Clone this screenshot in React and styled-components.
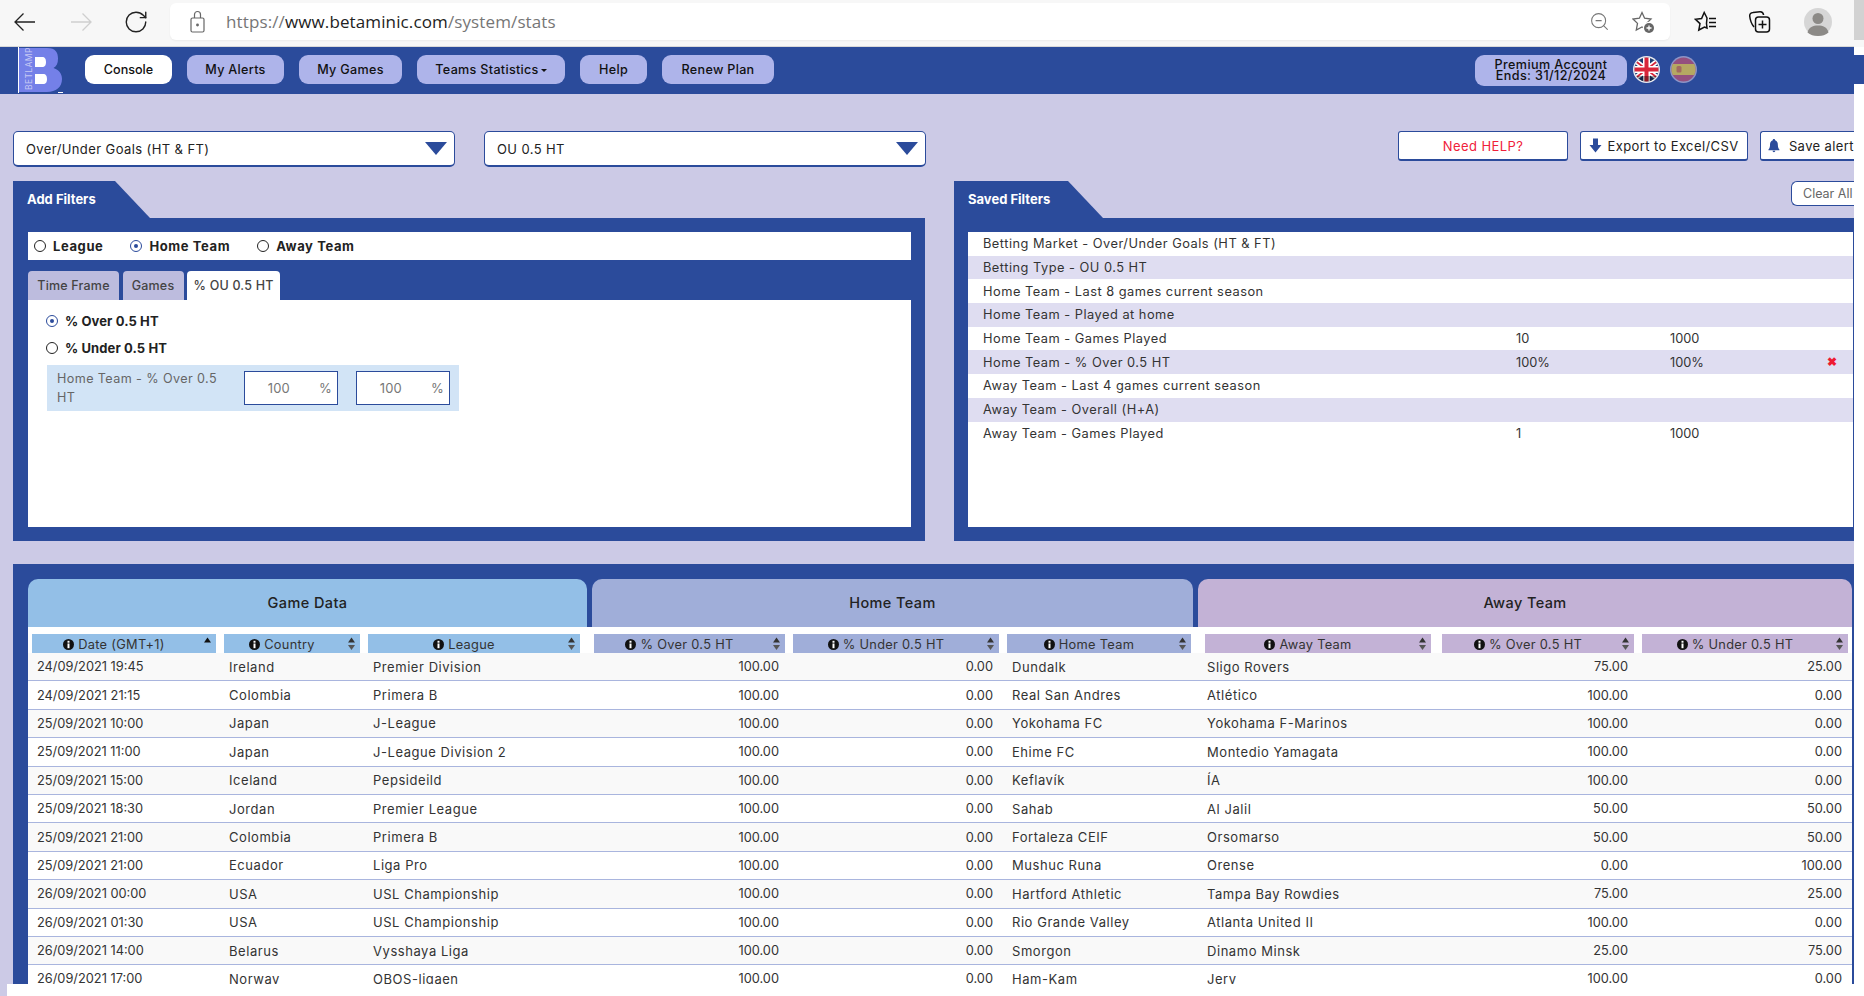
import React from "react";
import styled, { createGlobalStyle } from "styled-components";
import { RotateCw, ZoomOut } from "lucide-react";

const FONT = `Inter, "Open Sans", "Liberation Sans", sans-serif`;

const Global = createGlobalStyle`
  html, body { margin: 0; padding: 0; background: #fff; }
  #root { width: 1864px; height: 996px; overflow: hidden; }
  * { box-sizing: border-box; }
`;

const Page = styled.div`
  width: 1864px; height: 996px; display: flex; overflow: hidden; background: #fff;
  font-family: ${FONT}; font-size: 13px; color: #333;
`;
const Shot = styled.div`
  width: 1854px; height: 996px; display: flex; flex-direction: column; flex: none;
`;
const Gutter = styled.div`
  width: 10px; flex: none; display: flex; flex-direction: column;
`;
const GutterPart = styled.div`
  height: ${p => p.$h}px; background: ${p => p.$c};
`;
const Chrome = styled.div`
  height: 47px; flex: none; background: #f7f7f7; border-bottom: 1px solid #d9d9d9;
  display: flex; align-items: center; padding: 0 0 3px 14px;
`;
const ChromeBtn = styled.div`
  width: ${p => p.$w}px; flex: none; display: flex; align-items: center; color: ${p => p.$c || "#222"};
`;
const Address = styled.div`
  width: 1500px; height: 37px; background: #fff; border-radius: 6px; flex: none;
  display: flex; align-items: center; padding: 0 14px 0 20px; color: #767676;
  font-family: "Open Sans", sans-serif; font-size: 17px; letter-spacing: .12px;
  box-shadow: 0 1px 2px rgba(0,0,0,.05);
`;
const Url = styled.span`
  flex: 1; margin-left: 21px;
  b { font-weight: 400; color: #222; }
`;
const AddrIcon = styled.div`
  display: flex; margin-left: 22px; color: #777;
`;
const ChromeRight = styled.div`
  display: flex; align-items: center; flex: 1; padding-left: 24px;
`;
const ChromeIcon = styled.div`
  display: flex; margin-right: ${p => p.$mr || 0}px;
`;
const Nav = styled.div`
  height: 47px; flex: none; background: #2b4b9b; display: flex; align-items: center; padding-left: 18px;
`;
const Logo = styled.div`
  width: 45px; height: 46px; flex: none; margin-right: 22px; margin-bottom: 1px; display: flex;
  position: relative; overflow: hidden;
`;
const LogoText = styled.span`
  position: absolute; left: 7px; bottom: 3px; transform-origin: left bottom; transform: rotate(-90deg) translate(0, 100%);
  color: #c6c9f4; font-size: 8.5px; letter-spacing: .4px; line-height: 9px;
`;
const NavBtn = styled.div`
  width: ${p => p.$w}px; height: 29px; margin-right: 15px; margin-bottom: 2px; border-radius: 9px; display: flex; align-items: center; justify-content: center;
  background: ${p => p.$active ? "#fff" : "#aeb4ea"}; color: #111; font-size: 12.6px; font-weight: 500; flex: none; letter-spacing: ${p => p.$active ? 0 : ".3px"};
`;
const Caret = styled.span`
  width: 0; height: 0; margin-left: 2px; margin-top: 2px; border: 3px solid transparent; border-top: 3px solid #111; border-bottom: none;
`;
const NavRight = styled.div`
  margin-left: auto; display: flex; align-items: center; padding-right: 157px;
`;
const Premium = styled.div`
  width: 152px; height: 31px; border-radius: 9px; background: #aeb4ea; color: #111; font-size: 12.6px; line-height: 10.5px; letter-spacing: .4px;
  text-align: center; display: flex; flex-direction: column; justify-content: center; font-weight: 500; margin-right: 6px;
`;
const Flag = styled.svg`
  display: block; margin-left: ${p => p.$ml || 0}px; margin-top: -3px;
`;
const Body = styled.div`
  height: 890px; flex: none; overflow: hidden; background: #cccae6; padding: 37px 0 0 13px; display: flex; flex-direction: column;
`;
const TopRow = styled.div`
  display: flex; height: 36px; flex: none; margin-bottom: 14px;
`;
const Select = styled.div`
  width: 442px; height: 36px; background: #fff; border: 1px solid #2b4b9b; border-bottom-width: 2px; border-radius: 5px; flex: none; margin-right: 29px;
  display: flex; align-items: center; justify-content: space-between; padding: 0 7px 0 12px; color: #222; font-size: 13px; letter-spacing: .4px;
`;
const TriDown = styled.span`
  width: 0; height: 0; border-left: 11px solid transparent; border-right: 11px solid transparent; border-top: 13px solid #2b4b9b;
`;
const Actions = styled.div`
  margin-left: auto; display: flex; gap: 12px;
`;
const ActionBtn = styled.div`
  width: ${p => p.$w}px; height: 30px; background: #fff; border: 1px solid #2b4b9b; border-bottom-width: 2px; border-right-width: ${p => p.$clip ? 0 : "1px"}; border-radius: ${p => p.$clip ? "3px 0 0 3px" : "3px"}; display: flex; align-items: center;
  justify-content: ${p => p.$clip ? "flex-start" : "center"}; gap: ${p => p.$clip ? 9 : 5}px; color: ${p => p.$c || "#222"}; font-size: 13px; white-space: nowrap; overflow: hidden; letter-spacing: .4px;
  padding-left: ${p => p.$clip ? "7px" : 0};
`;
const Panels = styled.div`
  display: flex; gap: 29px; height: 360px; flex: none; margin-bottom: 23px;
`;
const Panel = styled.div`
  width: ${p => p.$w}px; flex: none; display: flex; flex-direction: column; position: relative;
`;
const Tab = styled.div`
  width: ${p => p.$w}px; height: 37px; flex: none; background: #2b4b9b; color: #fff; font-weight: 700; font-size: 13px;
  clip-path: polygon(0 0, ${p => p.$w - 35}px 0, 100% 100%, 0 100%); display: flex; align-items: flex-start; padding: 11px 0 0 14px; line-height: 14px;
`;
const ClearAll = styled.div`
  position: absolute; top: 0; right: 0; width: 63px; height: 25px; background: #fff; border: 1px solid #2b4b9b; border-right: none; border-radius: 6px 0 0 6px;
  display: flex; align-items: center; padding-left: 11px; color: #666; font-size: 12.5px; white-space: nowrap; overflow: hidden;
`;
const PanelBody = styled.div`
  flex: 1; background: #2b4b9b; padding: 14px ${p => p.$pr ?? 14}px 14px ${p => p.$pl ?? 15}px; display: flex; flex-direction: column;
`;
const RadioBar = styled.div`
  height: 28px; background: #fff; flex: none; display: flex; align-items: center; padding-left: 6px; font-weight: 700; color: #222; letter-spacing: .6px;
`;
const RadioBtn = styled.span`
  width: 12px; height: 12px; border-radius: 50%; border: 1.6px solid ${p => p.$on ? "#2b4b9b" : "#222"}; display: inline-flex; align-items: center; justify-content: center; flex: none; margin-right: 7px;
  &::after { content: ""; width: 4px; height: 4px; border-radius: 50%; background: ${p => p.$on ? "#2b4b9b" : "transparent"}; }
`;
const RadioLabel = styled.label`
  display: flex; align-items: center; margin-right: ${p => p.$mr || 0}px; height: ${p => p.$h ? p.$h + "px" : "auto"};
`;
const Tabs = styled.div`
  display: flex; gap: 3.5px; margin-top: 11px; height: 29px; flex: none;
`;
const FTab = styled.div`
  width: ${p => p.$w}px; height: 29px; background: ${p => p.$on ? "#fff" : "#bdbcde"}; color: #444; border-radius: 4px 4px 0 0; display: flex; align-items: center; justify-content: center; font-size: 12.5px; font-weight: 500; letter-spacing: .2px;
`;
const TabBody = styled.div`
  flex: 1; background: #fff; padding: 7px 19px;
`;
const StrongRadios = styled.div`
  font-weight: 700; color: #222; letter-spacing: .1px; margin-left: -1px;
`;
const RangeRow = styled.div`
  width: 412px; height: 46px; background: #d2e4f6; display: flex; align-items: center; padding-left: 10px; margin-top: 4px; margin-left: 0;
`;
const RangeLabel = styled.div`
  width: 187px; flex: none; line-height: 19px; color: #666; font-size: 12.6px; padding-right: 10px; letter-spacing: .4px; margin-top: -1px;
`;
const RangeInput = styled.div`
  width: 94px; height: 34px; flex: none; background: #fff; border: 1px solid #2b4b9b; margin-right: 18px; display: flex; align-items: center; justify-content: flex-end; color: #777; font-size: 13px; padding-right: 5px; letter-spacing: .2px;
  span:first-child { margin-right: 29px; }
`;
const SavedList = styled.div`
  flex: 1; background: #fff; margin-right: 1px;
`;
const SavedRow = styled.div`
  height: 23.7px; background: ${p => p.$alt ? "#dfddf1" : "#fff"}; display: grid; grid-template-columns: 533px 154px 161px 1fr; padding-left: 15px; align-items: center; color: #333; font-size: 12.8px; white-space: nowrap;
  span:first-child { letter-spacing: .5px; }
`;
const Del = styled.span`
  color: #ee1a32; font-weight: 900; font-size: 12px; line-height: 1; margin-left: -4px;
`;
const DataPanel = styled.div`
  width: 1841px; height: 420px; flex: none; background: #2b4b9b; padding: 15px 2px 0 15px; overflow: hidden;
`;
const Groups = styled.div`
  display: flex; height: 48px;
`;
const Group = styled.div`
  width: ${p => p.$w}px; margin-right: ${p => p.$mr || 0}px; flex: none; background: ${p => p.$c}; border-radius: 10px 10px 0 0; display: flex; align-items: center; justify-content: center; font-size: 14.5px; font-weight: 500; color: #222; letter-spacing: .4px; padding-bottom: 2px;
`;
const Table = styled.div`
  background: #fff; padding-top: 7px; height: 360px; overflow: hidden; font-size: 12.8px;
`;
const HeadRow = styled.div`
  display: flex; height: 19px;
`;
const HCell = styled.div`
  width: ${p => p.$w}px; margin-left: ${p => p.$ml}px; flex: none; background: ${p => p.$c}; position: relative; display: flex; align-items: center; justify-content: center; gap: 4px; color: #333; font-size: 12.8px; padding: 1px 20px 0 0; white-space: nowrap; letter-spacing: .3px;
`;
const Sort = styled.svg`
  position: absolute; right: 4px; top: 3px;
`;
const Row = styled.div`
  display: flex; height: 28.4px; align-items: center; background: ${p => p.$odd ? "#f9f9f9" : "#fff"}; border-bottom: 1px solid #a9b5de; white-space: nowrap; color: #333;
`;
const Cell = styled.div`
  width: ${p => p.$w}px; flex: none; padding-left: ${p => p.$pl || 0}px; padding-right: ${p => p.$pr || 0}px; text-align: ${p => p.$right ? "right" : "left"};
  letter-spacing: ${p => p.$text ? ".55px" : 0}; font-size: ${p => p.$text ? "13px" : "12.8px"};
`;
const Foot = styled.div`
  height: 12px; flex: none; display: flex;
`;
const FootStrip = styled.div`
  width: 7px; background: #cccae6;
`;

const Info = () => (
  <svg width="11" height="11" viewBox="0 0 11 11" aria-hidden="true">
    <circle cx="5.5" cy="5.5" r="5.5" fill="#111" />
    <rect x="4.5" y="1.8" width="2" height="1.9" fill="#fff" />
    <rect x="4.5" y="4.5" width="2" height="4.7" fill="#fff" />
  </svg>
);
const SortIcon = ({ only }) => (
  <Sort width="9" height="14" viewBox="0 0 9 14">
    <path d="M4.5 0.5 L8 5.5 H1 Z" fill={only ? "#111" : "#333"} />
    {!only && <path d="M4.5 13 L8 8 H1 Z" fill="#555" />}
  </Sort>
);
const LogoMark = () => (
  <svg width="45" height="46" viewBox="0 0 45 46" aria-hidden="true">
    <rect x="0" y="0" width="45" height="46" fill="#2b4b9b" />
    <rect x="0" y="0" width="1" height="46" fill="#fff" />
    <path d="M1 1 H29 C38 1 40 6 40 11.5 C40 16.5 38.5 19.5 35.5 21 C40 22.5 44 26 44 32 C44 40 38 45 29 45 H1 Z" fill="#7480e8" />
    <path d="M17 10 H24 C27 10 28 12 28 15 C28 18 27 20 24 20 H17 Z M17 27 H25 C28 27 29 29 29 32 C29 35 28 37 25 37 H17 Z" fill="#fff" />
    <rect x="40" y="45" width="5" height="1" fill="#fff" />
  </svg>
);
const UK = () => (
  <Flag width="27" height="27" viewBox="0 0 27 27">
    <defs><clipPath id="ukc"><circle cx="13.5" cy="13.5" r="12" /></clipPath></defs>
    <circle cx="13.5" cy="13.5" r="13.5" fill="#e8e8ee" />
    <g clipPath="url(#ukc)">
      <rect width="27" height="27" fill="#1d3d72" />
      <path d="M0 3 L27 24 M27 3 L0 24" stroke="#fff" strokeWidth="5" />
      <path d="M0 3 L27 24 M27 3 L0 24" stroke="#d8263a" strokeWidth="1.8" />
      <path d="M13.5 0 V27 M0 13.5 H27" stroke="#fff" strokeWidth="7" />
      <path d="M13.5 0 V27 M0 13.5 H27" stroke="#d8263a" strokeWidth="4" />
      <rect y="20" width="27" height="7" fill="#000" opacity=".35" />
    </g>
  </Flag>
);
const ES = () => (
  <Flag $ml={10} width="27" height="27" viewBox="0 0 27 27">
    <defs><clipPath id="esc"><circle cx="13.5" cy="13.5" r="12" /></clipPath></defs>
    <circle cx="13.5" cy="13.5" r="13.5" fill="#8d94c6" />
    <g clipPath="url(#esc)">
      <rect width="27" height="27" fill="#94507f" />
      <rect y="8" width="27" height="11" fill="#b5a862" />
      <rect x="6.5" y="10" width="5" height="6.5" rx="1.5" fill="#a26a60" />
    </g>
  </Flag>
);

const rows = [
  ["24/09/2021 19:45","Ireland","Premier Division","100.00","0.00","Dundalk","Sligo Rovers","75.00","25.00"],
  ["24/09/2021 21:15","Colombia","Primera B","100.00","0.00","Real San Andres","Atlético","100.00","0.00"],
  ["25/09/2021 10:00","Japan","J-League","100.00","0.00","Yokohama FC","Yokohama F-Marinos","100.00","0.00"],
  ["25/09/2021 11:00","Japan","J-League Division 2","100.00","0.00","Ehime FC","Montedio Yamagata","100.00","0.00"],
  ["25/09/2021 15:00","Iceland","Pepsideild","100.00","0.00","Keflavík","ÍA","100.00","0.00"],
  ["25/09/2021 18:30","Jordan","Premier League","100.00","0.00","Sahab","Al Jalil","50.00","50.00"],
  ["25/09/2021 21:00","Colombia","Primera B","100.00","0.00","Fortaleza CEIF","Orsomarso","50.00","50.00"],
  ["25/09/2021 21:00","Ecuador","Liga Pro","100.00","0.00","Mushuc Runa","Orense","0.00","100.00"],
  ["26/09/2021 00:00","USA","USL Championship","100.00","0.00","Hartford Athletic","Tampa Bay Rowdies","75.00","25.00"],
  ["26/09/2021 01:30","USA","USL Championship","100.00","0.00","Rio Grande Valley","Atlanta United II","100.00","0.00"],
  ["26/09/2021 14:00","Belarus","Vysshaya Liga","100.00","0.00","Smorgon","Dinamo Minsk","25.00","75.00"],
  ["26/09/2021 17:00","Norway","OBOS-ligaen","100.00","0.00","Ham-Kam","Jerv","100.00","0.00"],
];
const saved = [
  ["Betting Market - Over/Under Goals (HT & FT)"],
  ["Betting Type - OU 0.5 HT"],
  ["Home Team - Last 8 games current season"],
  ["Home Team - Played at home"],
  ["Home Team - Games Played","10","1000"],
  ["Home Team - % Over 0.5 HT","100%","100%","x"],
  ["Away Team - Last 4 games current season"],
  ["Away Team - Overall (H+A)"],
  ["Away Team - Games Played","1","1000"],
];
const G = "#93bfe7", H = "#a0aed9", A = "#c3b2d6";
const heads = [
  ["Date (GMT+1)",184,4,G,true],["Country",136,8,G],["League",212,8,G],
  ["% Over 0.5 HT",191,14,H],["% Under 0.5 HT",206,8,H],["Home Team",184,8,H],
  ["Away Team",226,14,A],["% Over 0.5 HT",192,11,A],["% Under 0.5 HT",206,8,A],
];

export default function App() {
  return (
    <Page>
      <Global />
      <Shot>
        <Chrome>
          <ChromeBtn $w={56}>
            <svg width="22" height="20" viewBox="0 0 22 20" fill="none" stroke="currentColor" strokeWidth="1.3" aria-hidden="true"><path d="M21 10 H1.5 M9.5 1.5 L1 10 L9.5 18.5" /></svg>
          </ChromeBtn>
          <ChromeBtn $w={53} $c="#cfcfcf">
            <svg width="22" height="20" viewBox="0 0 22 20" fill="none" stroke="currentColor" strokeWidth="1.3" aria-hidden="true"><path d="M1 10 H20.5 M12.5 1.5 L21 10 L12.5 18.5" /></svg>
          </ChromeBtn>
          <ChromeBtn $w={47}><RotateCw size={26} strokeWidth={1.3} /></ChromeBtn>
          <Address>
            <svg width="15" height="24" viewBox="0 0 15 24" fill="none" stroke="#666" strokeWidth="1.2" aria-hidden="true">
              <rect x="1" y="8" width="13" height="14" rx="1.5" />
              <path d="M4.5 8 V4.5 a3 3 0 0 1 6 0 V8" />
              <circle cx="7.5" cy="15" r=".8" fill="#666" />
            </svg>
            <Url>https://<b>www.betaminic.com</b>/system/stats</Url>
            <AddrIcon><ZoomOut size={21} strokeWidth={1.2} /></AddrIcon>
            <AddrIcon>
              <svg width="24" height="24" viewBox="0 0 24 24" fill="none" stroke="#666" strokeWidth="1.3" aria-hidden="true">
                <path d="M10 2.5 L12.6 8.2 L19 9 L14.5 13.4 L15.7 20 L10 17 L4.3 20 L5.5 13.4 L1 9 L7.4 8.2 Z" />
                <circle cx="17" cy="18" r="6.2" fill="#fff" stroke="none" />
                <circle cx="17" cy="18" r="5" fill="#666" stroke="none" />
                <path d="M17 15.5 V20.5 M14.5 18 H19.5" stroke="#fff" />
              </svg>
            </AddrIcon>
          </Address>
          <ChromeRight>
            <ChromeIcon $mr={30}>
              <svg width="24" height="24" viewBox="0 0 24 24" fill="none" stroke="#111" strokeWidth="1.5" aria-hidden="true">
                <path d="M13 8 L10.2 2.5 L7.6 8.5 L1.5 9.3 L6 13.6 L4.8 20 L10.5 17 L13 18 L12.5 13.5 Z" />
                <path d="M15 8.5 H22 M15 12.5 H22 M15 16.5 H22" />
              </svg>
            </ChromeIcon>
            <ChromeIcon $mr={32}>
              <svg width="24" height="24" viewBox="0 0 24 24" fill="none" stroke="#111" strokeWidth="1.5" aria-hidden="true">
                <path d="M6 17 C3.5 14 2 9 1.7 6 C1.5 4 3 2.5 5 2.4 L12 1.8 C14 1.7 15.3 3 15.6 5" />
                <rect x="7.5" y="7" width="14" height="15" rx="3" />
                <path d="M14.5 10.5 V18.5 M10.5 14.5 H18.5" />
              </svg>
            </ChromeIcon>
            <ChromeIcon>
              <svg width="28" height="28" viewBox="0 0 28 28" aria-hidden="true">
                <circle cx="14" cy="14" r="14" fill="#d6d6d6" />
                <circle cx="14" cy="10.5" r="5.5" fill="#8c8a87" />
                <path d="M3.5 24.5 C5 19 9 17.5 14 17.5 C19 17.5 23 19 24.5 24.5 C22 27 18 28 14 28 C10 28 6 27 3.5 24.5 Z" fill="#8c8a87" />
              </svg>
            </ChromeIcon>
          </ChromeRight>
        </Chrome>
        <Nav>
          <Logo>
            <LogoMark />
            <LogoText>BETLAMP</LogoText>
          </Logo>
          <NavBtn $w={87} $active>Console</NavBtn>
          <NavBtn $w={97}>My Alerts</NavBtn>
          <NavBtn $w={103}>My Games</NavBtn>
          <NavBtn $w={148}>Teams Statistics<Caret /></NavBtn>
          <NavBtn $w={67}>Help</NavBtn>
          <NavBtn $w={112}>Renew Plan</NavBtn>
          <NavRight>
            <Premium><span>Premium Account</span><span>Ends: 31/12/2024</span></Premium>
            <UK />
            <ES />
          </NavRight>
        </Nav>
        <Body>
          <TopRow>
            <Select>Over/Under Goals (HT &amp; FT)<TriDown /></Select>
            <Select>OU 0.5 HT<TriDown /></Select>
            <Actions>
              <ActionBtn $w={170} $c="#f0203a">Need HELP?</ActionBtn>
              <ActionBtn $w={168}>
                <svg width="13" height="15" viewBox="0 0 13 15" aria-hidden="true"><path d="M4 0.5 H9 V7 H12.5 L6.5 14.5 L0.5 7 H4 Z" fill="#2b4b9b" /></svg>
                Export to Excel/CSV
              </ActionBtn>
              <ActionBtn $w={94} $clip>
                <svg width="13" height="15" viewBox="0 0 13 15" aria-hidden="true"><path d="M6.5 0.5 C7.5 0.5 7.8 1.2 7.8 1.8 C10 2.4 10.8 4.5 10.8 7 C10.8 9.5 11.5 10.8 12.5 11.8 V12.6 H0.5 V11.8 C1.5 10.8 2.2 9.5 2.2 7 C2.2 4.5 3 2.4 5.2 1.8 C5.2 1.2 5.5 0.5 6.5 0.5 Z M5 13.3 H8 C8 14.2 7.3 14.8 6.5 14.8 C5.7 14.8 5 14.2 5 13.3 Z" fill="#2b4b9b" /></svg>
                Save alert
              </ActionBtn>
            </Actions>
          </TopRow>
          <Panels>
            <Panel $w={912}>
              <Tab $w={137}>Add Filters</Tab>
              <PanelBody>
                <RadioBar>
                  <RadioLabel $mr={27}><RadioBtn />League</RadioLabel>
                  <RadioLabel $mr={27}><RadioBtn $on />Home Team</RadioLabel>
                  <RadioLabel><RadioBtn />Away Team</RadioLabel>
                </RadioBar>
                <Tabs>
                  <FTab $w={91}>Time Frame</FTab>
                  <FTab $w={61}>Games</FTab>
                  <FTab $w={93} $on>% OU 0.5 HT</FTab>
                </Tabs>
                <TabBody>
                  <StrongRadios>
                    <RadioLabel $h={27}><RadioBtn $on />% Over 0.5 HT</RadioLabel>
                    <RadioLabel $h={27}><RadioBtn />% Under 0.5 HT</RadioLabel>
                  </StrongRadios>
                  <RangeRow>
                    <RangeLabel>Home Team - % Over 0.5 HT</RangeLabel>
                    <RangeInput><span>100</span><span>%</span></RangeInput>
                    <RangeInput><span>100</span><span>%</span></RangeInput>
                  </RangeRow>
                </TabBody>
              </PanelBody>
            </Panel>
            <Panel $w={900}>
              <Tab $w={149}>Saved Filters</Tab>
              <ClearAll>Clear All</ClearAll>
              <PanelBody $pr={0} $pl={14}>
                <SavedList>
                  {saved.map((r, i) => (
                    <SavedRow key={i} $alt={i % 2 === 1}>
                      <span>{r[0]}</span><span>{r[1]}</span><span>{r[2]}</span>
                      {r[3] ? <Del>✖</Del> : <span />}
                    </SavedRow>
                  ))}
                </SavedList>
              </PanelBody>
            </Panel>
          </Panels>
          <DataPanel>
            <Groups>
              <Group $w={559} $mr={5} $c={G}>Game Data</Group>
              <Group $w={601} $mr={5} $c={H}>Home Team</Group>
              <Group $w={654} $c={A}>Away Team</Group>
            </Groups>
            <Table>
              <HeadRow>
                {heads.map((h, i) => (
                  <HCell key={i} $w={h[1]} $ml={h[2]} $c={h[3]}>
                    <Info />{h[0]}<SortIcon only={h[4]} />
                  </HCell>
                ))}
              </HeadRow>
              {rows.map((r, i) => (
                <Row key={i} $odd={i % 2 === 0}>
                  <Cell $w={196} $pl={9}>{r[0]}</Cell>
                  <Cell $w={144} $pl={5} $text>{r[1]}</Cell>
                  <Cell $w={222} $pl={5} $text>{r[2]}</Cell>
                  <Cell $w={195} $pr={6} $right>{r[3]}</Cell>
                  <Cell $w={214} $pr={6} $right>{r[4]}</Cell>
                  <Cell $w={206} $pl={13} $text>{r[5]}</Cell>
                  <Cell $w={229} $pl={2} $text>{r[6]}</Cell>
                  <Cell $w={200} $pr={6} $right>{r[7]}</Cell>
                  <Cell $w={214} $pr={6} $right>{r[8]}</Cell>
                </Row>
              ))}
            </Table>
          </DataPanel>
        </Body>
        <Foot><FootStrip /></Foot>
      </Shot>
      <Gutter>
        <GutterPart $h={40} $c="#d2d2d2" />
        <GutterPart $h={7} $c="#f7f7f7" />
        <GutterPart $h={8} $c="#fff" />
        <GutterPart $h={29} $c="#2b4b9b" />
      </Gutter>
    </Page>
  );
}
